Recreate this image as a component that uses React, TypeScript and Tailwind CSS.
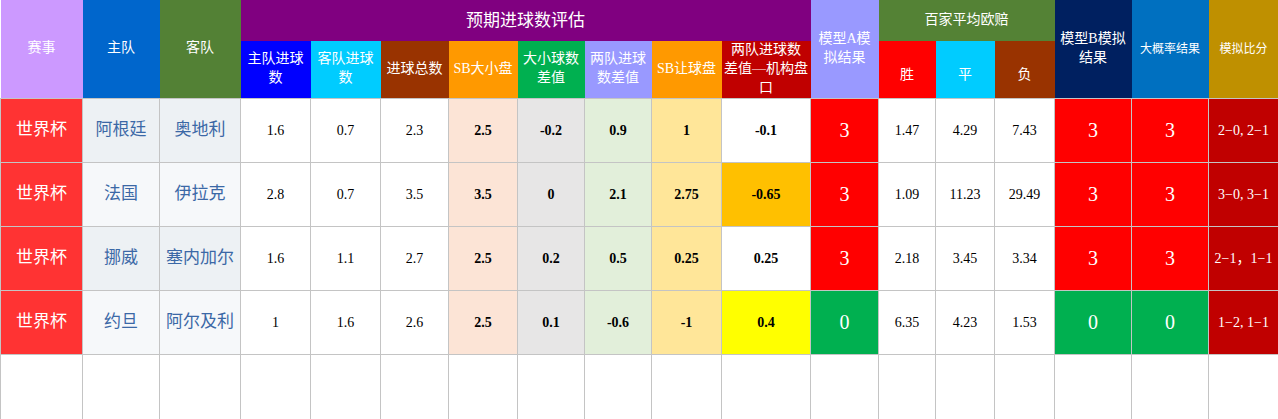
import React from "react";

type Row = {
  home: string;
  away: string;
  hg: string;
  ag: string;
  total: string;
  sbOu: string;
  ouDiff: string;
  goalDiff: string;
  sbHc: string;
  hcDiff: string;
  hcBg: string;
  modelA: string;
  win: string;
  draw: string;
  lose: string;
  modelB: string;
  likely: string;
  score: string;
  teamBg: string;
};

const rows: Row[] = [
  { home: "阿根廷", away: "奥地利", hg: "1.6", ag: "0.7", total: "2.3", sbOu: "2.5", ouDiff: "-0.2", goalDiff: "0.9", sbHc: "1", hcDiff: "-0.1", hcBg: "bg-white", modelA: "3", win: "1.47", draw: "4.29", lose: "7.43", modelB: "3", likely: "3", score: "2−0, 2−1", teamBg: "bg-[#edf1f4]" },
  { home: "法国", away: "伊拉克", hg: "2.8", ag: "0.7", total: "3.5", sbOu: "3.5", ouDiff: "0", goalDiff: "2.1", sbHc: "2.75", hcDiff: "-0.65", hcBg: "bg-[#ffc000]", modelA: "3", win: "1.09", draw: "11.23", lose: "29.49", modelB: "3", likely: "3", score: "3−0, 3−1", teamBg: "bg-[#f6f8fa]" },
  { home: "挪威", away: "塞内加尔", hg: "1.6", ag: "1.1", total: "2.7", sbOu: "2.5", ouDiff: "0.2", goalDiff: "0.5", sbHc: "0.25", hcDiff: "0.25", hcBg: "bg-white", modelA: "3", win: "2.18", draw: "3.45", lose: "3.34", modelB: "3", likely: "3", score: "2−1，1−1", teamBg: "bg-[#edf1f4]" },
  { home: "约旦", away: "阿尔及利", hg: "1", ag: "1.6", total: "2.6", sbOu: "2.5", ouDiff: "0.1", goalDiff: "-0.6", sbHc: "-1", hcDiff: "0.4", hcBg: "bg-[#ffff00]", modelA: "0", win: "6.35", draw: "4.23", lose: "1.53", modelB: "0", likely: "0", score: "1−2, 1−1", teamBg: "bg-[#f6f8fa]" },
];

const widths = [82, 77, 81, 70, 70, 68, 69, 67, 67, 70, 89, 68, 57, 59, 60, 77, 77, 70];

const cell = "border border-[#c4c4c4] text-center align-middle p-0";
const hd = "text-white text-center align-middle p-0 leading-[1.35] font-normal whitespace-nowrap";

export default function App() {
  return (
    <div
      className="w-[1278px] h-[419px] overflow-hidden bg-white"
      style={{ fontFamily: '"Liberation Serif", "Noto Sans CJK SC", serif' }}
    >
      <table className="table-fixed border-collapse w-[1278px]">
        <colgroup>
          {widths.map((w, i) => (
            <col key={i} style={{ width: w }} />
          ))}
        </colgroup>
        <thead>
          <tr className="h-[41px]">
            <th rowSpan={2} className={`${hd} bg-[#cc99ff] text-[14px]`}>赛事</th>
            <th rowSpan={2} className={`${hd} bg-[#0066cc] text-[14px]`}>主队</th>
            <th rowSpan={2} className={`${hd} bg-[#538135] text-[14px]`}>客队</th>
            <th colSpan={8} className={`${hd} bg-[#800080] text-[17px] pt-[2px]`}>预期进球数评估</th>
            <th rowSpan={2} className={`${hd} bg-[#9999ff] text-[14px]`}>
              模型A模<br />拟结果
            </th>
            <th colSpan={3} className={`${hd} bg-[#548235] text-[14px]`}>百家平均欧赔</th>
            <th rowSpan={2} className={`${hd} bg-[#002060] text-[14px]`}>
              模型B模拟<br />结果
            </th>
            <th rowSpan={2} className={`${hd} bg-[#0070c0] text-[12px]`}>大概率结果</th>
            <th rowSpan={2} className={`${hd} bg-[#bf9000] text-[12px]`}>模拟比分</th>
          </tr>
          <tr className="h-[57px]">
            <th className={`${hd} bg-[#0000ff] text-[14px]`}>
              主队进球<br />数
            </th>
            <th className={`${hd} bg-[#00ccff] text-[14px]`}>
              客队进球<br />数
            </th>
            <th className={`${hd} bg-[#993300] text-[14px]`}>进球总数</th>
            <th className={`${hd} bg-[#ff9900] text-[14px]`}>SB大小盘</th>
            <th className={`${hd} bg-[#00b050] text-[14px]`}>
              大小球数<br />差值
            </th>
            <th className={`${hd} bg-[#9999ff] text-[14px]`}>
              两队进球<br />数差值
            </th>
            <th className={`${hd} bg-[#ff9900] text-[14px]`}>SB让球盘</th>
            <th className={`${hd} bg-[#c00000] text-[14px] leading-[1.25]`}>
              两队进球数<br />差值—机构盘<br />口
            </th>
            <th className={`${hd} bg-[#ff0000] text-[14px] pt-3`}>胜</th>
            <th className={`${hd} bg-[#00ccff] text-[14px] pt-3`}>平</th>
            <th className={`${hd} bg-[#993300] text-[14px] pt-3`}>负</th>
          </tr>
        </thead>
        <tbody>
          {rows.map((r, i) => {
            const model = r.modelA === "0" ? "bg-[#00b050]" : "bg-[#ff0000]";
            return (
              <tr key={i} className="h-[64px]">
                <td className={`${cell} bg-[#ff3333] text-white text-[17px]`}>世界杯</td>
                <td className={`${cell} ${r.teamBg} text-[#3b68a6] text-[17px]`}>{r.home}</td>
                <td className={`${cell} ${r.teamBg} text-[#3b68a6] text-[17px]`}>{r.away}</td>
                <td className={`${cell} text-black text-[14px]`}>{r.hg}</td>
                <td className={`${cell} text-black text-[14px]`}>{r.ag}</td>
                <td className={`${cell} text-black text-[14px]`}>{r.total}</td>
                <td className={`${cell} bg-[#fce4d6] font-bold text-[14px]`}>{r.sbOu}</td>
                <td className={`${cell} bg-[#e7e6e6] font-bold text-[14px]`}>{r.ouDiff}</td>
                <td className={`${cell} bg-[#e2efda] font-bold text-[14px]`}>{r.goalDiff}</td>
                <td className={`${cell} bg-[#ffe699] font-bold text-[14px]`}>{r.sbHc}</td>
                <td className={`${cell} ${r.hcBg} font-bold text-[14px]`}>{r.hcDiff}</td>
                <td className={`${cell} ${model} text-white text-[20px]`}>{r.modelA}</td>
                <td className={`${cell} text-black text-[14px]`}>{r.win}</td>
                <td className={`${cell} text-black text-[14px]`}>{r.draw}</td>
                <td className={`${cell} text-black text-[14px]`}>{r.lose}</td>
                <td className={`${cell} ${model} text-white text-[20px]`}>{r.modelB}</td>
                <td className={`${cell} ${model} text-white text-[20px]`}>{r.likely}</td>
                <td className={`${cell} bg-[#c00000] text-white text-[14px] whitespace-nowrap`}>{r.score}</td>
              </tr>
            );
          })}
          <tr className="h-[65px]">
            {widths.map((_, i) => (
              <td key={i} className={cell}></td>
            ))}
          </tr>
        </tbody>
      </table>
    </div>
  );
}
